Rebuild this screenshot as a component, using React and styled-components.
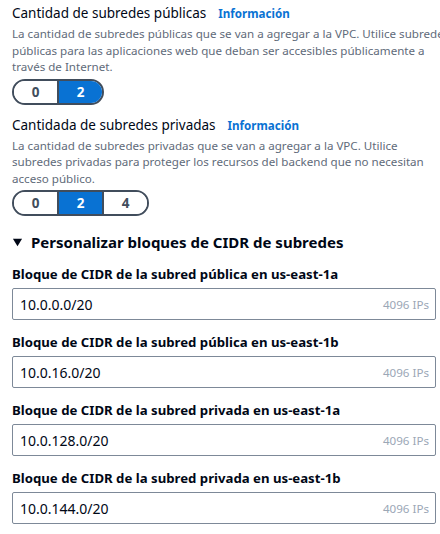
import React from 'react';
import styled, { createGlobalStyle } from 'styled-components';

const Global = createGlobalStyle`
  html, body {
    margin: 0;
    padding: 0;
    background: #ffffff;
    overflow: hidden;
  }
  body {
    font-family: 'Noto Sans', 'Open Sans', sans-serif;
    color: #000716;
  }
`

const Page = styled.div`
  width: 450.5px;
  padding: 3px 0 0 12px;
  box-sizing: border-box;
`

const Section = styled.div`
  margin-bottom: ${(p) => p.gap || 0}px;
`

const HeadRow = styled.div`
  display: flex;
  align-items: baseline;
  gap: 12px;
  font-size: 13.5px;
  line-height: 20px;
`

const Info = styled.a`
  color: #0972d3;
  font-size: 11.6px;
  font-weight: 700;
  text-decoration: none;
`

const Desc = styled.p`
  margin: 2px 0 3px;
  font-size: 11.6px;
  line-height: 16.5px;
  color: #5f6b7a;
`

const Segmented = styled.div`
  display: inline-flex;
  border: 2px solid #414d5c;
  border-radius: 14px;
  overflow: hidden;
  height: 22px;
`

const Seg = styled.div`
  width: 43px;
  display: flex;
  align-items: center;
  justify-content: center;
  font-size: 13.5px;
  font-weight: 700;
  color: ${(p) => (p.active ? '#ffffff' : '#414d5c')};
  background: ${(p) => (p.active ? '#0972d3' : '#ffffff')};
  & + & {
    border-left: 2px solid #414d5c;
  }
`

const Expander = styled.div`
  display: flex;
  align-items: center;
  gap: 8px;
  margin: 15px 0 11px;
  font-size: 15px;
  font-weight: 700;
  line-height: 22px;
`

const Caret = styled.svg`
  width: 11px;
  height: 11px;
`

const Field = styled.div`
  margin-bottom: 12px;
`

const Label = styled.div`
  font-size: 13.2px;
  font-weight: 700;
  line-height: 20px;
  margin-bottom: 4px;
`

const Input = styled.div`
  width: 424px;
  height: 32px;
  box-sizing: border-box;
  border: 1px solid #7d8998;
  border-radius: 2px;
  display: flex;
  align-items: center;
  justify-content: space-between;
  padding: 0 6px 0 7px;
  font-size: 14px;
`

const Hint = styled.span`
  font-size: 11.6px;
  color: #9ba7b6;
`

const SegmentGroup = ({ options, value }) => (
  <Segmented>
    {options.map((o) => (
      <Seg key={o} active={o === value}>{o}</Seg>
    ))}
  </Segmented>
)

const fields = [
  ['Bloque de CIDR de la subred pública en us-east-1a', '10.0.0.0/20'],
  ['Bloque de CIDR de la subred pública en us-east-1b', '10.0.16.0/20'],
  ['Bloque de CIDR de la subred privada en us-east-1a', '10.0.128.0/20'],
  ['Bloque de CIDR de la subred privada en us-east-1b', '10.0.144.0/20'],
]

const App = () => (
  <>
    <Global />
    <Page>
      <Section gap={10}>
        <HeadRow>
          <span>Cantidad de subredes públicas</span>
          <Info href="#">Información</Info>
        </HeadRow>
        <Desc>
          La cantidad de subredes públicas que se van a agregar a la VPC. Utilice subredes
          públicas para las aplicaciones web que deban ser accesibles públicamente a través de Internet.
        </Desc>
        <SegmentGroup options={['0', '2']} value="2" />
      </Section>
      <Section>
        <HeadRow>
          <span>Cantidada de subredes privadas</span>
          <Info href="#">Información</Info>
        </HeadRow>
        <Desc>
          La cantidad de subredes privadas que se van a agregar a la VPC. Utilice subredes
          privadas para proteger los recursos del backend que no necesitan acceso público.
        </Desc>
        <SegmentGroup options={['0', '2', '4']} value="2" />
      </Section>
      <Expander>
        <Caret viewBox="0 0 12 12">
          <path d="M1 2h10L6 10z" fill="#000716" />
        </Caret>
        Personalizar bloques de CIDR de subredes
      </Expander>
      {fields.map(([label, value]) => (
        <Field key={label}>
          <Label>{label}</Label>
          <Input>
            <span>{value}</span>
            <Hint>4096 IPs</Hint>
          </Input>
        </Field>
      ))}
    </Page>
  </>
)

export default App;
